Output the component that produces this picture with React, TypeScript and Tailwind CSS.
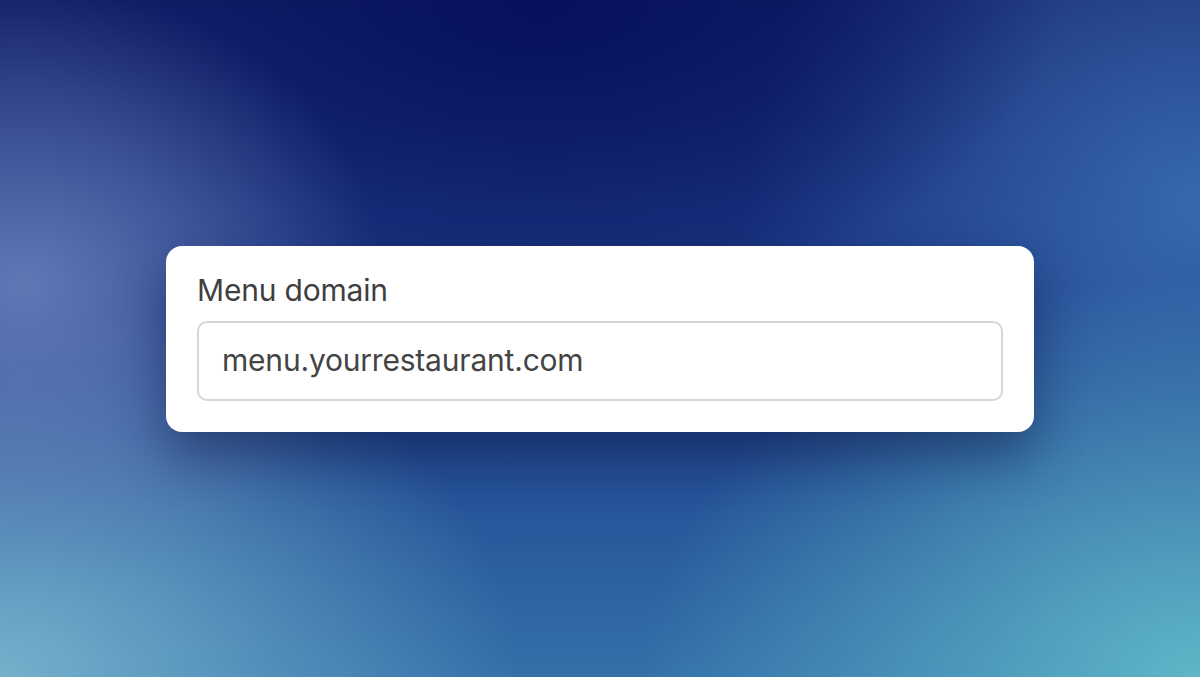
import React from 'react';

// Background is a stack of soft radial blobs over a vertical base gradient
const backdrop =
  'bg-[radial-gradient(ellipse_360px_300px_at_2%_42%,rgba(110,130,190,0.85),transparent),radial-gradient(ellipse_520px_380px_at_0%_100%,rgba(120,180,205,0.95),transparent),radial-gradient(ellipse_560px_400px_at_100%_100%,rgba(96,186,200,0.95),transparent),radial-gradient(ellipse_520px_300px_at_45%_0%,rgba(6,16,92,1),transparent),radial-gradient(ellipse_460px_420px_at_100%_30%,rgba(58,110,178,0.9),transparent),linear-gradient(180deg,#14206a_0%,#1d3f8c_55%,#3470aa_100%)]';

export default function App() {
  return (
    <div
      className={`w-[1200px] h-[677px] flex items-center justify-center ${backdrop}`}
      style={{ fontFamily: 'Inter, "Noto Sans", sans-serif' }}
    >
      <div className="w-[868px] h-[186px] bg-white rounded-[16px] px-[31px] pt-[26px] shadow-[0_24px_50px_rgba(10,20,60,0.45)] flex flex-col">
        <label className="text-[30px] leading-[36px] text-[#3f3f3f] tracking-[-0.2px]">Menu domain</label>
        <div className="mt-[13px] h-[80px] rounded-[10px] border-2 border-[#d6d6d6] flex items-center px-[23px]">
          <span className="text-[30px] text-[#444444] tracking-[-0.2px]">menu.yourrestaurant.com</span>
        </div>
      </div>
    </div>
  );
}
